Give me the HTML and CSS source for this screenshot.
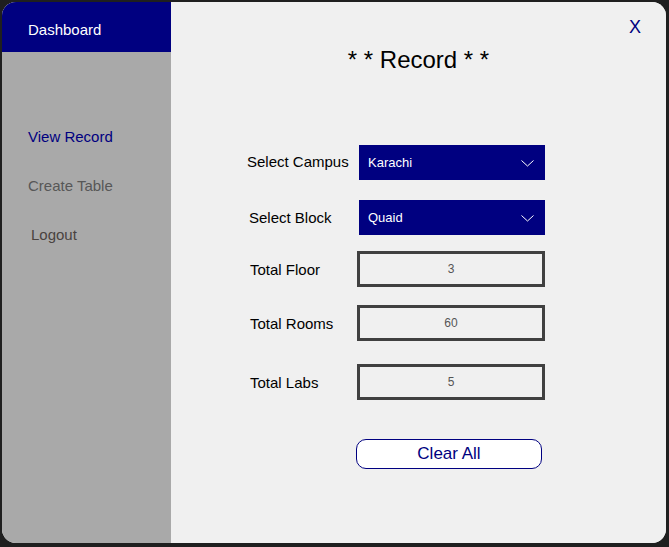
FILE: index.html
```html
<!DOCTYPE html>
<html lang="en">
<head>
<meta charset="utf-8">
<title>Record</title>
<link rel="stylesheet" href="styles.css">
</head>
<body>
<div class="window">
  <aside class="sidebar">
    <div class="brand">Dashboard</div>
    <nav class="nav">
      <div class="nav-item active">View Record</div>
      <div class="nav-item muted">Create Table</div>
      <div class="nav-item logout">Logout</div>
    </nav>
  </aside>
  <main class="main">
    <div class="topbar"><span class="close">X</span></div>
    <h1 class="title">* * Record * *</h1>
    <div class="form">
      <div class="row row-campus">
        <span class="label">Select Campus</span>
        <div class="select"><span>Karachi</span>
          <svg class="chev" width="13" height="7" viewBox="0 0 13 7"><polyline points="0.5,0.5 6.5,6 12.5,0.5" fill="none" stroke="#fff" stroke-width="1"/></svg>
        </div>
      </div>
      <div class="row row-block">
        <span class="label label-block">Select Block</span>
        <div class="select"><span>Quaid</span>
          <svg class="chev" width="13" height="7" viewBox="0 0 13 7"><polyline points="0.5,0.5 6.5,6 12.5,0.5" fill="none" stroke="#fff" stroke-width="1"/></svg>
        </div>
      </div>
      <div class="row row-floor">
        <span class="label label-total">Total Floor</span>
        <div class="field">3</div>
      </div>
      <div class="row row-rooms">
        <span class="label label-total">Total Rooms</span>
        <div class="field">60</div>
      </div>
      <div class="row row-labs">
        <span class="label label-total">Total Labs</span>
        <div class="field">5</div>
      </div>
      <div class="row row-btn">
        <button class="btn">Clear All</button>
      </div>
    </div>
  </main>
</div>
</body>
</html>
```
FILE: styles.css
```css
html, body {
  margin: 0;
  padding: 0;
  background: #1f1f1f;
  font-family: "Liberation Sans", Arial, sans-serif;
}
.window {
  margin: 2px 0 0 2px;
  width: 664px;
  height: 541px;
  border-radius: 14px;
  overflow: hidden;
  display: flex;
  background: #f0f0f0;
}
.sidebar {
  width: 169px;
  flex: none;
  background: #a9a9a9;
  display: flex;
  flex-direction: column;
}
.brand {
  height: 50px;
  background: #000080;
  color: #fff;
  font-size: 15px;
  display: flex;
  align-items: center;
  padding-left: 26px;
  padding-top: 4px;
  box-sizing: border-box;
}
.nav {
  padding-top: 60px;
  display: flex;
  flex-direction: column;
}
.nav-item {
  height: 49px;
  line-height: 49px;
  font-size: 15px;
  padding-left: 26px;
  box-sizing: border-box;
}
.nav-item.active { color: #000080; }
.nav-item.muted { color: #575757; }
.nav-item.logout { color: #4a4340; padding-left: 29px; }
.main {
  flex: 1;
  background: #f0f0f0;
  padding: 13px 25px 0 0;
  box-sizing: border-box;
}
.topbar {
  display: flex;
  justify-content: flex-end;
  height: 24px;
  line-height: 24px;
}
.close {
  color: #000080;
  font-size: 18px;
}
.title {
  margin: 7px 0 0 0;
  font-weight: normal;
  font-size: 24px;
  line-height: 28px;
  text-align: center;
  color: #000;
  padding-left: 25px;
}
.form {
  margin-top: 71px;
  margin-left: 76px;
  display: flex;
  flex-direction: column;
}
.row {
  display: flex;
  align-items: center;
}
.label {
  width: 110px;
  flex: none;
  font-size: 15px;
  color: #000;
}
.row-campus .label { margin-top: -2px; }
.label-block { padding-left: 2px; box-sizing: border-box; }
.label-total { padding-left: 3px; box-sizing: border-box; }
.select {
  margin-left: 2px;
  width: 186px;
  height: 35px;
  background: #000080;
  color: #fff;
  font-size: 13px;
  display: flex;
  align-items: center;
  justify-content: space-between;
  padding: 0 11px 0 9px;
  box-sizing: border-box;
}
.chev { margin-top: 1px; }
.field {
  width: 188px;
  height: 36px;
  border: 3px solid #404040;
  box-sizing: border-box;
  display: flex;
  align-items: center;
  justify-content: center;
  font-size: 12px;
  color: #555;
}
.row-block { margin-top: 20px; }
.row-floor { margin-top: 16px; }
.row-rooms { margin-top: 18px; }
.row-labs { margin-top: 23px; }
.row-btn { margin-top: 39px; padding-left: 109px; }
.btn {
  width: 186px;
  height: 30px;
  border: 1px solid #000080;
  border-radius: 10px;
  background: #fff;
  color: #000080;
  font-family: "Liberation Sans", Arial, sans-serif;
  font-size: 17px;
  padding: 0;
}
```
